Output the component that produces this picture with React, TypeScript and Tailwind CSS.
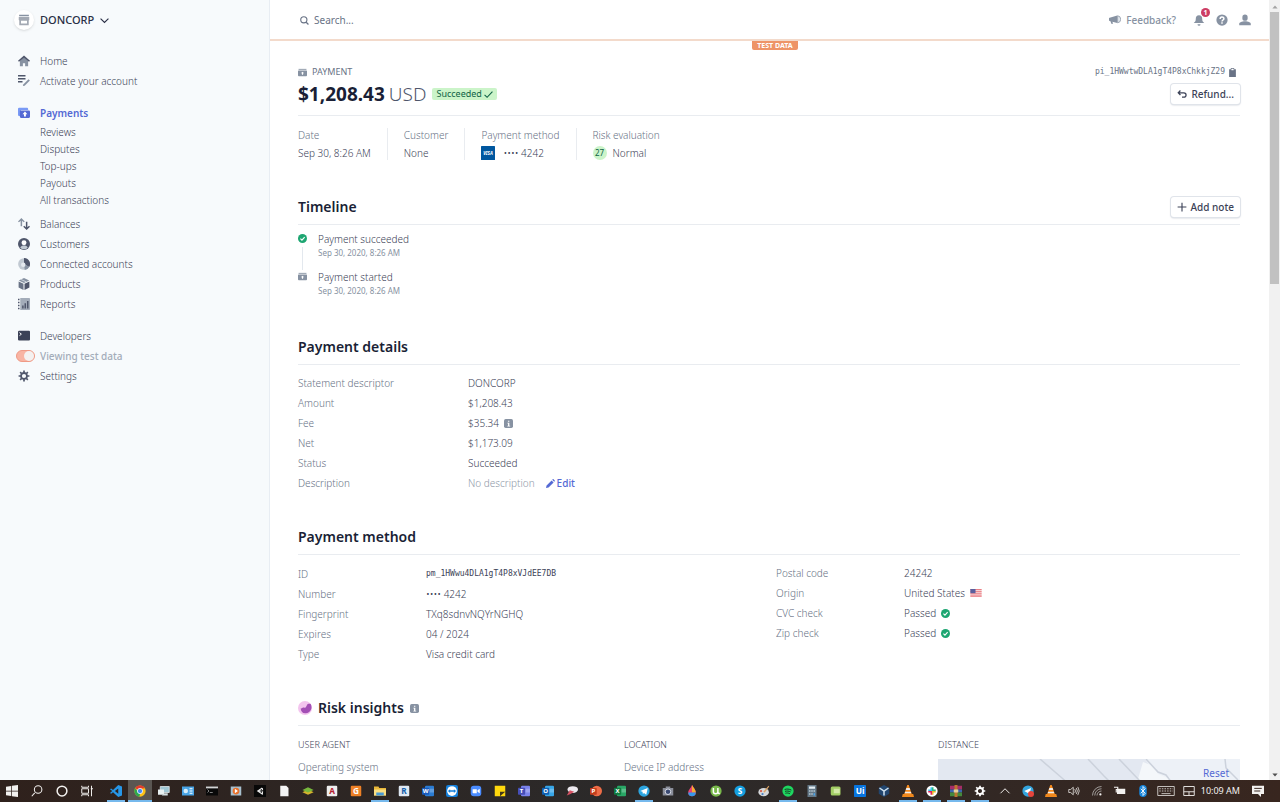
import type { ReactNode } from "react";

type IconProps = { children: ReactNode; className?: string };

function Icon({ children, className = "size-3" }: IconProps) {
  return (
    <svg viewBox="0 0 16 16" className={`shrink-0 ${className}`} fill="currentColor" aria-hidden="true">
      {children}
    </svg>
  );
}

const dark = "#4f566b";
const mid = "#8792a2";

function CardIcon({ className }: { className?: string }) {
  return (
    <Icon className={className}>
      <path d="M1 1.500h14v2H1z" opacity=".8" />
      <path fillRule="evenodd" d="M1 4.500h14a1 1 0 0 1 1 1V13a1.500 1.500 0 0 1-1.500 1.500h-13A1.500 1.500 0 0 1 0 13V5.500a1 1 0 0 1 1-1zM8 6.500 5 9.300H7V12h2V9.300h2z" />
    </Icon>
  );
}

function CheckCircle() {
  return (
    <Icon className="size-[9px]">
      <circle cx="8" cy="8" r="8" fill="#1ea672" />
      <path d="m4.300 8.200 2.700 2.600 4.800-5.200" fill="none" stroke="#fff" strokeWidth="2" />
    </Icon>
  );
}

function InfoIcon() {
  return (
    <Icon className="size-[9px]">
      <rect width="16" height="16" rx="3" fill="#8792a2" />
      <path d="M7 3h2.500v2H7zM6 6.500h3.500V12H11v1.500H6V12h1.200V8H6z" fill="#fff" />
    </Icon>
  );
}

const homeIcon = (
  <Icon>
    <path d="M2.500 7.500 8 3l5.500 4.500V15h-4v-4h-3v4h-4z" fill={mid} />
    <path d="m8 .8 8 6.700-1.300 1.500L8 3.500 1.300 9 0 7.500z" fill={dark} />
  </Icon>
);
const activateIcon = (
  <Icon>
    <path d="M0 0h10v2H0zM0 4h10v2H0zM0 8h6v2H0z" fill={dark} />
    <path d="m7 12.500 7-7 1.800 1.800-7 7-2.300.5z" fill={mid} />
  </Icon>
);
const paymentsIcon = (
  <Icon>
    <path d="M0 2.500A1.500 1.500 0 0 1 1.500 1H12a1.500 1.500 0 0 1 1.500 1.500V4H4v8H1.500A1.500 1.500 0 0 1 0 10.500z" fill="#7a9af5" />
    <rect x="2.500" y="4.500" width="13.500" height="10" rx="1.500" fill="#5469d4" />
    <path d="m9.300 6 3.200 3.500h-2v3H8v-3H6z" fill="#fff" />
  </Icon>
);
const balancesIcon = (
  <Icon>
    <path d="M4.500 0 9 4.500 7.700 5.800 5.500 3.600V11h-2V3.600L1.300 5.800 0 4.500z" fill={mid} />
    <path d="M11.500 16 7 11.500l1.300-1.300 2.200 2.200V5h2v7.400l2.200-2.200 1.300 1.300z" fill={dark} />
  </Icon>
);
const customersIcon = (
  <Icon>
    <circle cx="8" cy="8" r="8" fill={dark} />
    <circle cx="8" cy="6.300" r="3.300" fill="#fff" />
    <path d="M3 13c1-2.500 3-3 5-3s4 .5 5 3a7 7 0 0 1-10 0z" fill="#c1c9d2" />
  </Icon>
);
const connectedIcon = (
  <Icon>
    <circle cx="8" cy="8" r="7.800" fill="#c1c9d2" />
    <path d="M8 0a8 8 0 0 1 7 12L8 8z" fill={dark} />
    <path d="M15 12a8 8 0 0 1-6 4l-1-8z" fill={mid} />
    <circle cx="7" cy="9" r="3" fill="#e3e8ee" />
  </Icon>
);
const productsIcon = (
  <Icon>
    <path d="m8 0 7 3.200L8 6.500 1 3.200z" fill={mid} />
    <path d="M.8 4.500 7.300 7.500V16L.8 12.600z" fill="#697386" />
    <path d="M15.200 4.500 8.700 7.500V16l6.500-3.400z" fill={dark} />
    <path d="m4 2 7 3.200" stroke="#dfe4ea" fill="none" />
  </Icon>
);
const reportsIcon = (
  <Icon>
    <path d="M0 1h2v2H0zM0 5h2v2H0zM0 9h2v2H0zM0 13h2v2H0z" fill={dark} />
    <path d="M3 0h12a1 1 0 0 1 1 1v14a1 1 0 0 1-1 1H3z" fill="#a3acb9" />
    <path d="M5.500 10h2v4h-2zM8.700 7h2v7h-2zM12 4h2v10h-2z" fill={dark} />
  </Icon>
);
const developersIcon = (
  <Icon>
    <rect y="1" width="16" height="13" rx="1.500" fill="#3c4257" />
    <path d="m2 3.500 2.500 2L2 7.500" stroke="#fff" strokeWidth="1.300" fill="none" />
  </Icon>
);
const settingsIcon = (
  <Icon>
    <circle cx="8" cy="8" r="4" fill="none" stroke={dark} strokeWidth="2.400" />
    <path d="M8 .8v3M8 12.200v3M.8 8h3M12.200 8h3M2.900 2.900 5 5M11 11l2.100 2.100M13.100 2.900 11 5M5 11l-2.100 2.100" stroke={dark} strokeWidth="2.300" />
  </Icon>
);

function NavLink({ icon, label, active }: { icon: ReactNode; label: string; active?: boolean }) {
  return (
    <a href="#" className={`flex h-5 items-center gap-2.5 ${active ? "font-semibold text-[#5469d4]" : ""}`}>
      {icon}
      {label}
    </a>
  );
}

function Sidebar() {
  return (
    <aside className="w-[270px] shrink-0 border-r border-[#e8edf3] bg-[#f7fafc] pl-[18px] text-[#3c4257]">
      <button className="mt-2 flex h-6 items-center gap-1.5 text-[11px] font-medium text-[#2a2f45]">
        <span className="-ml-1 flex size-5 items-center justify-center rounded-full bg-white shadow">
          <Icon className="size-3">
            <path d="M1.500 1h13v2h-13z" fill={mid} />
            <path fillRule="evenodd" d="M1 4h14v4l-.7.5V15H1.700V8.500L1 8zm3 5v3.500h8V9z" fill="#a3a9b3" />
          </Icon>
        </span>
        DONCORP
        <Icon className="size-[9px]">
          <path d="m1 4.500 7 7 7-7" fill="none" stroke="currentColor" strokeWidth="2" />
        </Icon>
      </button>
      <nav className="mt-[19px]">
        <NavLink icon={homeIcon} label="Home" />
        <NavLink icon={activateIcon} label="Activate your account" />
        <div className="mt-3">
          <NavLink icon={paymentsIcon} label="Payments" active />
          {["Reviews", "Disputes", "Top-ups", "Payouts", "All transactions"].map((label) => (
            <a key={label} href="#" className="flex h-[17px] items-center pl-[22px]">
              {label}
            </a>
          ))}
        </div>
        <div className="mt-1.5">
          <NavLink icon={balancesIcon} label="Balances" />
          <NavLink icon={customersIcon} label="Customers" />
          <NavLink icon={connectedIcon} label="Connected accounts" />
          <NavLink icon={productsIcon} label="Products" />
          <NavLink icon={reportsIcon} label="Reports" />
        </div>
        <div className="mt-3">
          <NavLink icon={developersIcon} label="Developers" />
          <label className="-ml-0.5 flex h-5 items-center gap-[5px] font-medium text-[#a3acb9]">
            <input
              type="checkbox"
              defaultChecked
              className="h-3 w-[19px] appearance-none rounded-full border border-[#ef9a86] bg-[#f8b4a3] before:ml-[7px] before:block before:size-2.5 before:rounded-full before:bg-[#f4f1f0]"
            />
            Viewing test data
          </label>
          <NavLink icon={settingsIcon} label="Settings" />
        </div>
      </nav>
    </aside>
  );
}

function TopBar() {
  return (
    <header className="flex h-[41px] shrink-0 items-center border-b-2 border-[#f3dacb] pt-px pr-[18px] pl-[30px] text-[#697386]">
      <label className="flex flex-1 items-center gap-[5px]">
        <Icon className="size-[9px]">
          <circle cx="6.800" cy="6.800" r="5.500" fill="none" stroke="currentColor" strokeWidth="2" />
          <path d="m11 11 4 4" stroke="currentColor" strokeWidth="2.200" />
        </Icon>
        <input
          type="search"
          aria-label="Search"
          placeholder="Search..."
          className="w-60 font-normal outline-none placeholder:text-[#697386]"
        />
      </label>
      <div className="flex items-center gap-[11px] text-[#8792a2]">
        <a href="#" className="mr-1.5 flex items-center gap-[5px] font-medium">
          <Icon>
            <path d="M11 2v10L4.500 10.200 5.500 13H3L2 9.500a2.500 2.500 0 0 1 0-5z" fill="#8792a2" />
            <path d="M11.500 2.300a4.800 4.800 0 0 1 0 9.500z" fill="#e3e8ee" stroke="#8792a2" />
          </Icon>
          Feedback?
        </a>
        <button aria-label="Notifications, 1 unread" className="relative">
          <Icon>
            <path d="M8 1.500c3 0 4.300 2.300 4.300 5 0 2.500.6 3.500 2.700 5.500H1C3.100 10 3.700 9 3.700 6.500c0-2.700 1.300-5 4.300-5zM6 13.500h4a2 2 0 0 1-4 0z" />
          </Icon>
          <span className="absolute -top-1.5 left-2 flex size-[9px] items-center justify-center rounded-full bg-[#cd3d64] text-[7px] font-bold text-white">
            1
          </span>
        </button>
        <button aria-label="Help">
          <Icon>
            <circle cx="8" cy="8" r="7.500" />
            <path d="M5.500 6.500C5.500 3 10.500 3 10.500 6.300 10.500 8 8 8 8 10M8 11v2" fill="none" stroke="#fff" strokeWidth="2" />
          </Icon>
        </button>
        <button aria-label="Account">
          <Icon>
            <rect x="4.500" y=".5" width="7" height="8.500" rx="3.500" />
            <path d="M.3 15v-2c0-2 3.500-3.500 7.700-3.500s7.700 1.500 7.700 3.500v2z" />
          </Icon>
        </button>
      </div>
    </header>
  );
}

function ActionButton({ icon, children }: { icon: ReactNode; children: ReactNode }) {
  return (
    <button className="flex h-5 items-center gap-1 rounded-[3px] bg-white px-1.5 text-[10px] font-medium text-[#3c4257] shadow-[0_0_0_1px_#e0e4ea,0_1px_2px_#b8bec8]">
      {icon}
      {children}
    </button>
  );
}

function SectionHeader({ children }: { children: ReactNode }) {
  return (
    <div className="flex h-[29px] items-center border-b border-[#e9ecf0] pb-1.5 text-[14px] font-semibold text-[#1a1f36]">
      {children}
    </div>
  );
}

function Row({ label, children, wide, tall }: { label: string; children: ReactNode; wide?: boolean; tall?: boolean }) {
  return (
    <div className={`flex items-center ${tall ? "h-[21px]" : "h-5"}`}>
      <dt className={`shrink-0 text-[#697386] ${wide ? "w-[170px]" : "w-32"}`}>{label}</dt>
      <dd className="flex items-center gap-[5px]">{children}</dd>
    </div>
  );
}

function Fact({ label, children }: { label: string; children: ReactNode }) {
  return (
    <div>
      <dt className="flex h-[18px] items-center text-[#697386]">{label}</dt>
      <dd className="flex h-[18px] items-center">{children}</dd>
    </div>
  );
}

function Divider() {
  return <div className="mx-4 my-0.5 w-px bg-[#e9ecf0]" />;
}

function Flag() {
  return (
    <svg viewBox="0 0 24 17" className="h-2 w-3" aria-label="US flag">
      <path d="M0 0h24v17H0z" fill="#fbe3e3" />
      <path d="M0 1h24M0 5h24M0 9h24M0 13h24M0 16.500h24" stroke="#e8747c" strokeWidth="2" />
      <path d="M0 0h11v9H0z" fill="#5a5f9e" />
    </svg>
  );
}

function Payment() {
  return (
    <>
      <div className="mt-[14px] flex h-4 items-center justify-between text-[9px] text-[#697386]">
        <h2 className="flex items-center gap-[5px] font-normal">
          <CardIcon className="size-[9px] text-[#8792a2]" />
          PAYMENT
        </h2>
        <span className="mr-[3px] flex items-center gap-[3px] font-['DejaVu_Sans_Mono',monospace] text-[8px]">
          pi_1HWwtwDLA1gT4P8xChkkjZ29
          <button aria-label="Copy ID">
            <Icon className="size-[9px]">
              <path d="M2 2h3V0h6v2h3v14H2zm4-.8V4h4V1.200z" fillRule="evenodd" />
            </Icon>
          </button>
        </span>
      </div>
      <div className="mt-0.5 flex h-[34px] items-center justify-between border-b border-[#e9ecf0] pb-[9px]">
        <div className="flex items-center gap-1.5">
          <h1 className="flex gap-1 text-[19px] leading-6 font-bold text-[#1a1f36]">
            $1,208.43 <span className="font-light text-[#4f566b]">USD</span>
          </h1>
          <span className="flex h-3 items-center gap-0.5 rounded-[2px] bg-[#cbf4c9] px-1 text-[9px] font-normal text-[#0e6245]">
            Succeeded
            <Icon className="size-[9px]">
              <path d="m1 8.500 4.500 4.500L15 3" fill="none" stroke="currentColor" strokeWidth="2" />
            </Icon>
          </span>
        </div>
        <ActionButton
          icon={
            <Icon className="size-2.5">
              <path d="M5.500 2.500 2 6l3.500 3.500M2.500 6H11a3 3 0 0 1 0 7H8" fill="none" stroke="currentColor" strokeWidth="2" />
            </Icon>
          }
        >
          Refund...
        </ActionButton>
      </div>
      <dl className="mt-2.5 flex">
        <Fact label="Date">Sep 30, 8:26 AM</Fact>
        <Divider />
        <Fact label="Customer">None</Fact>
        <Divider />
        <Fact label="Payment method">
          <svg viewBox="0 0 28 28" className="mr-2 size-3.5" aria-hidden="true">
            <rect width="28" height="28" rx="1" fill="#00579f" />
            <text x="14" y="18" textAnchor="middle" fontSize="9" fontWeight="700" fontStyle="italic" fill="#fff">VISA</text>
          </svg>
          •••• 4242
        </Fact>
        <Divider />
        <Fact label="Risk evaluation">
          <span className="mr-1.5 flex size-3.5 items-center justify-center rounded-full bg-[#cbf4c9] text-[8px] font-normal text-[#0e6245]">27</span>
          Normal
        </Fact>
      </dl>
    </>
  );
}

function Timeline() {
  return (
    <section className="mt-[34px]">
      <SectionHeader>
        <h2 className="flex-1">Timeline</h2>
        <ActionButton
          icon={
            <Icon className="size-2.5">
              <path d="M8 1v14M1 8h14" stroke="currentColor" strokeWidth="1.800" />
            </Icon>
          }
        >
          Add note
        </ActionButton>
      </SectionHeader>
      <ol className="mt-[7px]">
        <li className="flex h-[38px] gap-[11px]">
          <div className="flex w-[9px] flex-col items-center gap-1 pt-0.5">
            <CheckCircle />
            <div className="w-px flex-1 bg-[#e3e8ee]" />
          </div>
          <div>
            <p className="leading-[14px]">Payment succeeded</p>
            <time className="block text-[8px] leading-[14px] font-normal text-[#8792a2]">Sep 30, 2020, 8:26 AM</time>
          </div>
        </li>
        <li className="flex h-7 gap-[11px]">
          <div className="flex w-[9px] flex-col items-center pt-0.5">
            <CardIcon className="size-[9px] text-[#8792a2]" />
          </div>
          <div>
            <p className="leading-[14px]">Payment started</p>
            <time className="block text-[8px] leading-[14px] font-normal text-[#8792a2]">Sep 30, 2020, 8:26 AM</time>
          </div>
        </li>
      </ol>
    </section>
  );
}

function Details() {
  return (
    <section className="mt-[38px]">
      <SectionHeader>
        <h2>Payment details</h2>
      </SectionHeader>
      <dl className="mt-2">
        <Row wide label="Statement descriptor">DONCORP</Row>
        <Row wide label="Amount">$1,208.43</Row>
        <Row wide label="Fee">
          $35.34 <InfoIcon />
        </Row>
        <Row wide label="Net">$1,173.09</Row>
        <Row wide label="Status">Succeeded</Row>
        <Row wide label="Description">
          <span className="text-[#8f99a8]">No description</span>
          <button className="ml-1.5 flex items-center gap-0.5 font-medium text-[#5469d4]">
            <Icon className="size-[9px]">
              <path d="m0 16 1-4.500L10 2.500 13.500 6l-9 9zM11 1.500l1-1a1 1 0 0 1 1.400 0L15.500 2.600a1 1 0 0 1 0 1.400l-1 1z" />
            </Icon>
            Edit
          </button>
        </Row>
      </dl>
    </section>
  );
}

function Method() {
  return (
    <section className="mt-[33px]">
      <SectionHeader>
        <h2>Payment method</h2>
      </SectionHeader>
      <div className="mt-2 grid grid-cols-2 gap-3.5">
        <dl>
          <Row tall label="ID">
            <span className="font-['DejaVu_Sans_Mono',monospace] text-[8px]">pm_1HWwu4DLA1gT4P8xVJdEE7DB</span>
          </Row>
          <Row label="Number">•••• 4242</Row>
          <Row label="Fingerprint">TXq8sdnvNQYrNGHQ</Row>
          <Row label="Expires">04 / 2024</Row>
          <Row label="Type">Visa credit card</Row>
        </dl>
        <dl>
          <Row label="Postal code">24242</Row>
          <Row label="Origin">
            United States <Flag />
          </Row>
          <Row label="CVC check">
            Passed <CheckCircle />
          </Row>
          <Row label="Zip check">
            Passed <CheckCircle />
          </Row>
        </dl>
      </div>
    </section>
  );
}

function Risk() {
  return (
    <section className="mt-[33px]">
      <SectionHeader>
        <Icon className="mr-1.5 size-3.5">
          <circle cx="8" cy="8" r="8" fill="#f3c4ee" />
          <path d="M3 8.500C5 9 4.500 7 6.500 7.500S9 7 10 5s3-2 4.500-1.500A7 7 0 0 1 9 14c-3.500.5-5.500-2-6-5.500z" fill="#a34fb5" />
        </Icon>
        <h2 className="mr-1.5">Risk insights</h2>
        <InfoIcon />
      </SectionHeader>
      <div className="mt-[11px] grid grid-cols-[326fr_314fr_302fr]">
        <div>
          <h3 className="h-4 text-[9px] leading-4">USER AGENT</h3>
          <p className="mt-1 h-5 leading-5 text-[#697386]">Operating system</p>
        </div>
        <div>
          <h3 className="h-4 text-[9px] leading-4">LOCATION</h3>
          <p className="mt-1 h-5 leading-5 text-[#697386]">Device IP address</p>
        </div>
        <div>
          <h3 className="h-4 text-[9px] leading-4">DISTANCE</h3>
          <div className="relative mt-1.5 h-32 overflow-hidden bg-[#e3e8f1]">
            <svg viewBox="0 0 302 128" preserveAspectRatio="xMinYMin slice" className="size-full" fill="none" aria-hidden="true">
              <path d="M207 0h95v128h-70l-30-108 10-12z" fill="#edf1f7" />
              <path d="m200 20 5-17 10 4 5 8 12 5-8 8z" fill="#f4f7fa" />
              <path d="m102 0 22 19 20 18M150 0l16 17 20 20M181 0l20 21M208 0l12 13 8 3 6 8M287 0l1 9 12 12" stroke="#ccd2dc" strokeWidth="1.500" />
            </svg>
            <button className="absolute top-1.5 right-[11px] leading-4 font-normal text-[#5469d4]">Reset</button>
          </div>
        </div>
      </div>
    </section>
  );
}

function Tile({ letter, fill, color = "#fff" }: { letter: string; fill: string; color?: string }) {
  return (
    <Icon>
      <rect x="1" y="1" width="14" height="14" rx="1.500" fill={fill} />
      <text x="8" y="12" fontSize="11" fontWeight="700" textAnchor="middle" fill={color}>{letter}</text>
    </Icon>
  );
}

function Office({ letter, fill, back }: { letter: string; fill: string; back: string }) {
  return (
    <Icon>
      <rect x="4" y="1" width="12" height="14" rx="1.500" fill={back} />
      <path d="M10 5h6v5h-6z" fill="#fff" opacity=".25" />
      <rect y="3.500" width="9.500" height="9.500" rx="1" fill={fill} />
      <text x="4.800" y="11" fontSize="8" fontWeight="700" textAnchor="middle" fill="#fff">{letter}</text>
    </Icon>
  );
}

function Disc({ fill, children }: { fill: string; children?: ReactNode }) {
  return (
    <Icon>
      <circle cx="8" cy="8" r="7.500" fill={fill} />
      {children}
    </Icon>
  );
}

function Cone() {
  return (
    <Icon>
      <path d="M7 0h2l4 12H3z" fill="#f78b1e" />
      <path d="m5.800 4-.8 2.500h6L10.200 4zM4.200 9l-.7 2h9L11.800 9z" fill="#eee" />
      <path d="M1 12h14l1 4H0z" fill="#f0881c" />
    </Icon>
  );
}

const startItems: [string, ReactNode][] = [
  ["Start", <Icon><path d="M0 2.200 7 1.200v6.300H0zM8 1l8-1v7.500H8zM0 8.500h7v6.300l-7-1zM8 8.500h8V16l-8-1z" /></Icon>],
  ["Search Windows", <Icon><path d="M5 10.500 1 15" stroke="currentColor" strokeWidth="1.400" /><circle cx="9.500" cy="6" r="5" fill="none" stroke="currentColor" strokeWidth="1.400" /></Icon>],
  ["Cortana", <Icon><circle cx="8" cy="8" r="6.500" fill="none" stroke="currentColor" strokeWidth="2" /></Icon>],
  ["Task view", <Icon><path d="M1 1v2h9V1M1 15v-2h9v2M1 5h9v6H1zM14 1v14M13 5h3" fill="none" stroke="currentColor" strokeWidth="1.300" /></Icon>],
];

type App = { name: string; icon: ReactNode; open?: boolean; focused?: boolean };

const apps: App[] = [
  { name: "Visual Studio Code", open: true, icon: <Icon><path d="m11 0 5 2v12l-5 2-7-6.500L1.500 11.500 0 10.500 3 8 0 5.500l1.500-1L4 6.500zm0 4.500L6.500 8l4.500 3.500z" fill="#2797e8" /></Icon> },
  { name: "Chrome", open: true, focused: true, icon: <Icon><circle cx="8" cy="8" r="7.500" fill="#fbc116" /><path d="M8 8 1.500 4.200A7.500 7.500 0 0 1 14.500 4.200L8 5z" fill="#e33b2e" /><path d="M1.500 4.200 8 12l-.8 3.500A7.500 7.500 0 0 1 1.500 4.200z" fill="#2da94f" /><circle cx="8" cy="8" r="3.500" fill="#4688f1" stroke="#fff" /></Icon> },
  { name: "Remote Desktop", icon: <Icon><path d="M3 2h12v8H3z" fill="#9fc6d3" stroke="#e8eef0" /><path d="M0 6h8v7H0z" fill="#e9f1f2" /><path d="M8 11h5v3H5z" fill="#d5dfe2" /></Icon> },
  { name: "Control Panel", icon: <Icon><path d="M0 2h16v12H0z" fill="#48a4e6" /><circle cx="5" cy="8" r="3" fill="#d8eefb" /><path d="M10 5h4M10 8h4M10 11h4" stroke="#fff" strokeWidth="1.500" /></Icon> },
  { name: "Command Prompt", icon: <Icon><path d="M0 2h16v12H0z" fill="#090909" /><path d="M0 2h16v2.500H0z" fill="#d4d4d4" /><path d="m2 6 2 2-2 2M5 10h4" stroke="#aaa" fill="none" /></Icon> },
  { name: "Media Player", icon: <Icon><path d="M1 2h14v12H1z" fill="#a8c0cf" /><circle cx="8" cy="8" r="4.500" fill="#e8702b" /><path d="m6.500 5 4 3-4 3z" fill="#fff" /></Icon> },
  { name: "Unity", icon: <Icon><path d="M0 0h16v16H0z" fill="#080808" /><path d="M11 4 5 8l6 4 .5-3.500M11 4l.5 3M5 8h5" fill="none" stroke="#e9e9e9" strokeWidth="1.500" /></Icon> },
  { name: "Document", icon: <Icon><path d="M3 1h8l3 3v11H3z" fill="#f3f3f3" /></Icon> },
  { name: "BlueStacks", icon: <Icon><path d="m8 6 7.500 3.500L8 13 .5 9.500z" fill="#d5b52d" /><path d="m8 3 7.500 3.500L8 10 .5 6.500z" fill="#78b83d" /></Icon> },
  { name: "AutoCAD", icon: <Tile letter="A" fill="#eeeeee" color="#b5202f" /> },
  { name: "Gnuplot", icon: <Tile letter="G" fill="#ef8126" /> },
  { name: "File Explorer", open: true, icon: <Icon><path d="M0 2h6l1 2h9v10H0z" fill="#e9b839" /><path d="M0 6h16v8H0z" fill="#fbdf83" /><path d="M3 10h10v4H3z" fill="#4b9bd5" /></Icon> },
  { name: "Revit", icon: <Tile letter="R" fill="#dfe8f2" color="#1762ac" /> },
  { name: "Word", icon: <Office letter="W" fill="#185abd" back="#2b7cd3" /> },
  { name: "TeamViewer", icon: <Icon><rect width="16" height="16" rx="3" fill="#1580db" /><circle cx="8" cy="8" r="6.500" fill="#fff" /><path d="m2.500 8 3-2.500V7h5V5.500l3 2.500-3 2.500V9h-5v1.500z" fill="#1580db" /></Icon> },
  { name: "Zoom", icon: <Icon><rect x="1" y="1" width="14" height="14" rx="4" fill="#4a8cff" /><path d="M3.500 5.500H9V11H4.500a1 1 0 0 1-1-1zM10 7l3-2v6l-3-2z" fill="#fff" /></Icon> },
  { name: "Sticky Notes", icon: <Icon><path d="M1 1h14v14H1z" fill="#ffd80d" /><path d="M8 15V9h7z" fill="#403719" /></Icon> },
  { name: "Teams", icon: <Office letter="T" fill="#464eb8" back="#7b83eb" /> },
  { name: "Outlook", icon: <Office letter="O" fill="#0f5fb3" back="#37a6e8" /> },
  { name: "Snip", icon: <Icon><ellipse cx="9" cy="6" rx="7" ry="4.500" fill="#ece9ef" /><path d="m1 14 4-7 6 2-5 3z" fill="#d65163" /></Icon> },
  { name: "PowerPoint", icon: <Icon><circle cx="9" cy="8" r="7" fill="#ed6c47" /><rect y="4" width="9" height="9" rx="1" fill="#c43e1c" /><text x="4.500" y="11" fontSize="8" fontWeight="700" textAnchor="middle" fill="#fff">P</text></Icon> },
  { name: "Excel", icon: <Office letter="X" fill="#107c41" back="#29a766" /> },
  { name: "Telegram", open: true, icon: <Disc fill="#2ca5e0"><path d="m3 8 10-4-2 9-3-2.500L6.500 12 6 9z" fill="#fff" /></Disc> },
  { name: "Camera", icon: <Icon><path d="M5 2h6v2h4v10H1V4h4z" fill="#8a8e9a" /><circle cx="8" cy="9" r="3.700" fill="#394972" stroke="#dadce5" strokeWidth="1.300" /></Icon> },
  { name: "Paint 3D", icon: <Icon><path d="M8 0c3 5 5 6.500 5 10a5 5 0 0 1-10 0C3 6.500 6 5 8 0z" fill="#e94174" /><path d="M8 0c3 5 5 6.500 5 10H8z" fill="#f5ae31" /><path d="M3 10h10a5 5 0 0 1-10 0z" fill="#3699eb" /></Icon> },
  { name: "uTorrent", icon: <Disc fill="#79b94b"><path d="M4.500 4v5c0 3.500 6 3.500 6 0V4m0 5c0 2 1 2.500 2.500 2" fill="none" stroke="#fff" strokeWidth="2" /></Disc> },
  { name: "Skype", icon: <Disc fill="#159fe0"><text x="8" y="12" fontSize="11" fontWeight="700" textAnchor="middle" fill="#fff">S</text></Disc> },
  { name: "Paint", icon: <Icon><ellipse cx="7.500" cy="9.500" rx="7" ry="5.500" fill="#d5d8db" /><path d="m7 9 7-8 1 1-6 8z" fill="#dba364" /><circle cx="4" cy="8" r="1.500" fill="#d6584a" /><circle cx="6" cy="12" r="1.500" fill="#4b82c3" /></Icon> },
  { name: "Spotify", open: true, icon: <Disc fill="#1ed760"><path d="M3.500 6c3-1 6-.7 9 .8M4 8.500c2.500-.8 5-.5 7.500.7M4.500 11c2-.6 4-.4 6 .6" fill="none" stroke="#173521" strokeWidth="1.300" /></Disc> },
  { name: "Calculator", icon: <Icon><path d="M2 0h12v16H2z" fill="#657887" /><path d="M4 2h8v3H4z" fill="#e5eef3" /><path d="M4 7h2v2H4zM7 7h2v2H7zM10 7h2v2h-2zM4 11h2v2H4zM7 11h2v2H7z" fill="#b7c7d1" /><path d="M10 11h2v3h-2z" fill="#4aa5eb" /></Icon> },
  { name: "Notes", icon: <Icon><rect x="1" y="2" width="13" height="12" rx="2" fill="#a3ce65" /><path d="M5 5h8v6H5z" fill="#d3e9a7" /></Icon> },
  { name: "UiPath", icon: <Icon><rect width="16" height="16" rx="1" fill="#0875df" /><text x="8" y="12" fontSize="11" fontWeight="700" textAnchor="middle" fill="#fff">Ui</text></Icon> },
  { name: "VirtualBox", icon: <Icon><path d="m8 0 7 3.500v8L8 16l-7-4.500v-8z" fill="#22466f" /><path d="m2 4 6 4 6-4M8 8v6" fill="none" stroke="#cfe1ef" strokeWidth="2" /></Icon> },
  { name: "VLC", open: true, icon: <Cone /> },
  { name: "Slack", open: true, icon: <Disc fill="#fff"><path d="M7 3v4H3" fill="none" stroke="#36c5f0" strokeWidth="2" /><path d="M9 3v4h4" fill="none" stroke="#2eb67d" strokeWidth="2" /><path d="M3 9h4v4" fill="none" stroke="#e01e5a" strokeWidth="2" /><path d="M9 13V9h4" fill="none" stroke="#ecb22e" strokeWidth="2" /></Disc> },
  { name: "WinRAR", open: true, icon: <Icon><path d="M0 1h16v5H0z" fill="#a62d67" /><path d="M0 6h16v4H0z" fill="#3c65b0" /><path d="M0 10h16v5H0z" fill="#448a3b" /><path d="M6 0h4v16H6z" fill="#bd7530" /><path d="M5 6h6v4H5z" fill="#e4d19c" /></Icon> },
  { name: "Windows Settings", open: true, icon: <Icon><circle cx="8" cy="8" r="4" fill="none" stroke="#fff" strokeWidth="2.500" /><path d="M8 1v3M8 12v3M1 8h3M12 8h3M3 3l2 2M11 11l2 2M13 3l-2 2M5 11l-2 2" stroke="#fff" strokeWidth="2.300" /></Icon> },
];

const tray: [string, ReactNode][] = [
  ["Hidden icons", <Icon><path d="m2 11 6-6 6 6" fill="none" stroke="currentColor" strokeWidth="1.300" /></Icon>],
  ["Telegram status", <Disc fill="#34a5de"><path d="m3 8 9-4-2 8z" fill="#fff" /><circle cx="12" cy="12" r="4" fill="#e5443c" /></Disc>],
  ["VLC status", <Cone />],
  ["Volume", <Icon><path d="M1 6h2.500L7 3v10l-3.500-3H1zM9 5.500q2 2.500 0 5M11 4q3 4 0 8M13 2.500q4 5.500 0 11" fill="none" stroke="currentColor" /></Icon>],
  ["Network", <Icon><path d="M2 14A12 12 0 0 1 14 2M5 14a9 9 0 0 1 9-9M8 14a6 6 0 0 1 6-6" fill="none" stroke="#a9a6a4" strokeWidth="1.200" /><circle cx="12.500" cy="12.500" r="1.500" /></Icon>],
  ["Battery", <Icon><path d="M4 5h11v7H4z" /><path d="M0 3h5v3H3v4" fill="none" stroke="currentColor" strokeWidth="1.500" /></Icon>],
  ["Bluetooth", <Icon><rect x="3" width="10" height="16" rx="5" fill="#1685db" /><path d="m5 5 6 6-3 3V2l3 3-6 6" fill="none" stroke="#fff" strokeWidth="1.200" /></Icon>],
  ["Keyboard", <svg viewBox="0 0 24 16" className="h-3 w-[18px]" fill="none" stroke="currentColor" aria-hidden="true"><path d="M1 2h22v12H1z" /><path d="M3 5h18M3 8h18" strokeDasharray="2 1.500" /><path d="M6 11.500h12" /></svg>],
  ["Touchpad", <Icon><path d="M1 2h14v12H1zM1 9h14M8 9v5" fill="none" stroke="currentColor" strokeWidth="1.200" /></Icon>],
];

function Taskbar() {
  return (
    <footer className="flex h-[22px] shrink-0 items-stretch bg-linear-to-r from-[#2f211c] via-[#2b2a2a] to-[#38261f] text-[#f3f1ef]">
      {startItems.map(([name, icon]) => (
        <button key={name} aria-label={name} className="flex w-[25px] items-center justify-center">
          {icon}
        </button>
      ))}
      <div className="ml-1 flex">
        {apps.map(({ name, icon, open, focused }) => (
          <button
            key={name}
            aria-label={name}
            className={`flex w-6 items-center justify-center pt-0.5 ${focused ? "bg-[#5a5652]" : ""}`}
          >
            <span
              className={`flex h-5 items-center border-b-2 ${focused ? "w-6" : "w-[18px]"} justify-center ${open ? "border-[#76b9ed]" : "border-transparent"}`}
            >
              {icon}
            </span>
          </button>
        ))}
      </div>
      <div className="ml-0.5 flex flex-1">
        {tray.map(([name, icon]) => (
          <button key={name} aria-label={name} className="flex w-[23px] items-center justify-center">
            {icon}
          </button>
        ))}
        <time className="ml-auto flex items-center text-[9px] font-normal whitespace-nowrap">10:09 AM</time>
        <button aria-label="Notification center" className="mr-4 ml-3 flex items-center">
          <Icon>
            <path d="M0 1h16v11h-4v4l-4-4H0z" />
            <path d="M3 4.500h10M3 8h8" stroke="#38261f" strokeWidth="1.300" />
          </Icon>
        </button>
      </div>
    </footer>
  );
}

function Scrollbar() {
  return (
    <div className="flex w-[11px] shrink-0 flex-col items-center bg-[#f1f1f1] text-[#505050]" aria-hidden="true">
      <Icon className="mt-1 mb-0.5 size-1.5 text-[#a3a3a3]">
        <path d="m8 4 7 8H1z" />
      </Icon>
      <div className="h-[272px] w-[9px] bg-[#c1c1c1]" />
      <Icon className="mt-auto mb-0.5 size-1.5">
        <path d="m8 12 7-8H1z" />
      </Icon>
    </div>
  );
}

export default function App() {
  return (
    <div className="flex h-screen flex-col overflow-hidden bg-white font-['Noto_Sans','Open_Sans',sans-serif] text-[10px] leading-4 font-light text-[#3c4257]">
      <div className="flex min-h-0 flex-1">
        <Sidebar />
        <div className="flex min-w-0 flex-1 flex-col overflow-hidden">
          <TopBar />
          <main className="min-h-0 flex-1 overflow-hidden pr-[29px] pl-7">
            <div className="flex justify-center pl-3">
              <span className="h-[9px] rounded-b-[2px] bg-[#ee9467] px-[5px] text-[7px] leading-[9px] font-bold text-white">TEST DATA</span>
            </div>
            <Payment />
            <Timeline />
            <Details />
            <Method />
            <Risk />
          </main>
        </div>
        <Scrollbar />
      </div>
      <Taskbar />
    </div>
  );
}
